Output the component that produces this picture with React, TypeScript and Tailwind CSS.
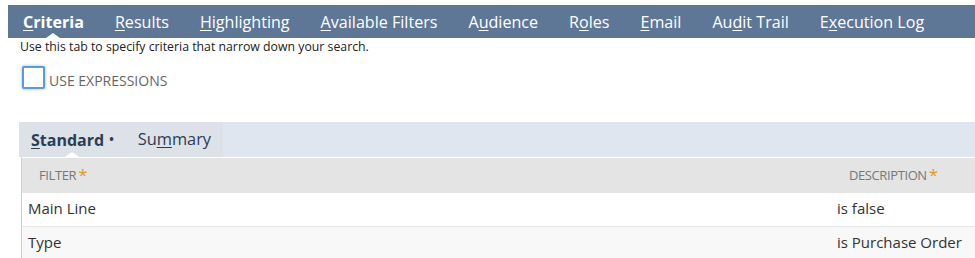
import React from 'react';

const tabs = [
  { pre: '', u: 'C', post: 'riteria', active: true },
  { pre: '', u: 'R', post: 'esults' },
  { pre: '', u: 'H', post: 'ighlighting' },
  { pre: '', u: 'A', post: 'vailable Filters' },
  { pre: 'A', u: 'u', post: 'dience' },
  { pre: 'R', u: 'o', post: 'les' },
  { pre: '', u: 'E', post: 'mail' },
  { pre: 'Au', u: 'd', post: 'it Trail' },
  { pre: 'E', u: 'x', post: 'ecution Log' },
];

const rows = [
  { filter: 'Main Line', desc: 'is false' },
  { filter: 'Type', desc: 'is Purchase Order' },
];

const Notch = () => (
  <span className="absolute bottom-0 left-1/2 h-0 w-0 -translate-x-1/2 border-x-[7px] border-b-[5px] border-x-transparent border-b-white" />
);

const App = () => {
  return (
    <div className="h-[258px] w-[975px] overflow-hidden bg-white font-['Open_Sans',sans-serif]">
      <div className="pt-[5px] pl-[8px]">
        <div className="flex h-[33px] items-center gap-[31px] bg-[#5f7797] pl-[15px] text-[16.1px] text-white">
          {tabs.map((t) => (
            <span
              key={t.u + t.post}
              className={t.active ? 'relative flex h-full items-center pt-[1px] font-bold' : 'flex h-full items-center pt-[1px]'}
            >
              {t.pre}
              <span className="underline underline-offset-2">{t.u}</span>
              {t.post}
              {t.active && <Notch />}
            </span>
          ))}
        </div>
      </div>

      <p className="mt-[1px] pl-[20px] text-[12.3px] leading-[16px] text-[#222]">
        Use this tab to specify criteria that narrow down your search.
      </p>

      <div className="mt-[9px] flex items-center pl-[22px]">
        <span className="h-[23px] w-[23px] rounded-[2px] border-2 border-[#5a9be0] bg-white shadow-[0_0_3px_#7db4ec]" />
        <span className="mt-[6px] ml-[4px] text-[14px] text-[#666]">USE EXPRESSIONS</span>
      </div>

      <div className="mt-[31px] ml-[19px]">
        <div className="flex h-[35px] bg-[#dfe6f0]">
          <div className="flex w-[204px] items-center gap-[24px] bg-[#dde1e8] pl-[12px] text-[16px] text-[#2b3d55]">
            <span className="relative flex h-full items-center font-bold">
              <span className="underline underline-offset-2">S</span>tandard
              <span className="ml-[5px] text-[12px]">•</span>
              <Notch />
            </span>
            <span className="flex h-full items-center text-[16.4px]">
              Su<span className="underline underline-offset-2">m</span>mary
            </span>
          </div>
        </div>

        <div className="ml-[2px] border-l border-[#cfcfcf]">
          <div className="flex h-[36px] items-center border-t border-white bg-[#e4e4e4] text-[13px] tracking-[-0.4px] text-[#777]">
            <span className="ml-[17px] flex-1">
              FILTER<span className="ml-[2px] align-top text-[17px] leading-none text-[#e39a1a]">*</span>
            </span>
            <span className="w-[126px]">
              DESCRIPTION<span className="ml-[2px] align-top text-[17px] leading-none text-[#e39a1a]">*</span>
            </span>
          </div>
          {rows.map((r, i) => (
            <div
              key={r.filter}
              className={
                i % 2 === 0
                  ? 'flex h-[34px] items-center border-b border-[#e6e6e6] bg-white pb-[2px] text-[15px] text-[#333]'
                  : 'flex h-[32px] items-center bg-[#f8f8f8] pb-[2px] text-[15px] text-[#333]'
              }
            >
              <span className="ml-[6px] flex-1">{r.filter}</span>
              <span className="w-[138px]">{r.desc}</span>
            </div>
          ))}
        </div>
      </div>
    </div>
  );
};

export default App;
